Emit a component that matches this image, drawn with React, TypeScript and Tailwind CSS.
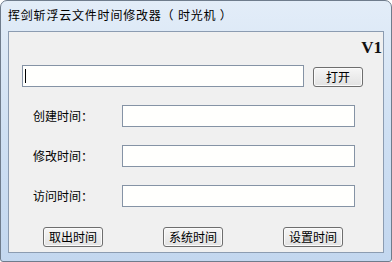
import React from "react";

const font = { fontFamily: '"Noto Sans CJK SC", "Noto Sans", sans-serif' };

const TextBox = ({ className = "" }: { className?: string }) => (
  <div className={`h-[22px] bg-[#fffffd] border border-[#8593a5] ${className}`} />
);

const Btn = ({ label, className = "" }: { label: string; className?: string }) => (
  <button
    className={`h-[20px] w-[60px] rounded-[3px] border border-[#6e6e6e] bg-gradient-to-b from-[#f6f6f6] to-[#e2e2e2] text-[12px] leading-none text-black shadow-[inset_0_0_0_1px_#fbfbfb] ${className}`}
  >
    {label}
  </button>
);

const App = () => {
  return (
    <div
      className="w-[392px] h-[262px] bg-white text-black"
      style={font}
    >
      {/* window frame */}
      <div className="flex h-full w-full flex-col rounded-t-[7px] rounded-b-[3px] border border-[#6f7c8c] bg-gradient-to-b from-[#e3edf8] via-[#cfe0f3] to-[#c3d7ef]">
        {/* title bar */}
        <div className="flex h-[30px] items-center pl-[7px] pb-[2px] text-[12px] tracking-[0.8px] text-black">
          挥剑斩浮云文件时间修改器（ 时光机 ）
        </div>

        {/* client area */}
        <div className="mx-[7px] mb-[8px] flex-1 border border-[#8c9cb1] bg-[#f0f0f0] pt-[6px]">
          <div className="flex h-[19px] justify-end pr-[1px]">
            <span
              className="text-[17px] font-bold leading-[19px] text-[#111]"
              style={{ fontFamily: '"Liberation Serif", "DejaVu Serif", serif' }}
            >
              V1
            </span>
          </div>

          <div className="mt-[8px] flex items-start pl-[13px]">
            <div className="flex h-[22px] w-[282px] items-center border border-[#8593a5] bg-[#fffffd] pl-[2px]">
              <div className="h-[14px] w-px bg-black" />
            </div>
            <Btn label="打开" className="ml-[9px] mt-[2px] !w-[50px]" />
          </div>

          {["创建时间：", "修改时间：", "访问时间："].map((t) => (
            <div key={t} className="mt-[18px] flex items-center pl-[24px]">
              <span className="w-[89px] text-[12px] leading-none">{t}</span>
              <TextBox className="w-[233px]" />
            </div>
          ))}

          <div className="mt-[20px] flex gap-[60px] pl-[34px]">
            <Btn label="取出时间" />
            <Btn label="系统时间" />
            <Btn label="设置时间" />
          </div>
        </div>
      </div>
    </div>
  );
};

export default App;
